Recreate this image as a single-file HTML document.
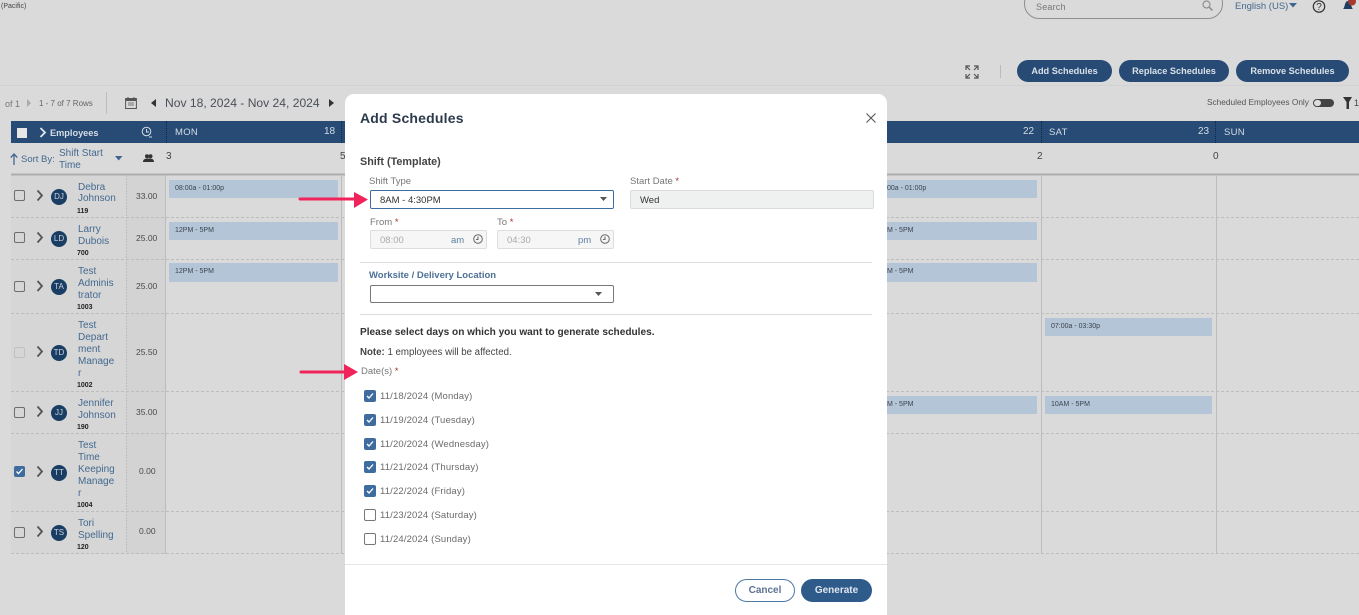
<!DOCTYPE html>
<html><head><meta charset="utf-8"><style>
html,body{margin:0;padding:0;width:1359px;height:615px;overflow:hidden;background:#dadada}
body{position:relative;font-family:"Liberation Sans",sans-serif;color:#4a4a4a}
#w{position:absolute;left:0;top:0;width:1359px;height:615px;overflow:hidden;filter:blur(.35px)}
.t{position:absolute;white-space:nowrap;font-size:10px;line-height:12px;height:12px;transform:translateY(1px)}
.b{position:absolute;box-sizing:border-box}
.s{position:absolute;background:#b4c5d7;font-size:7px;line-height:18px;padding-left:6px;box-sizing:border-box;color:#3b444e;white-space:nowrap;overflow:hidden}
.lnk{color:#43698f;font-size:10px}
.n{transform:translateY(3px)}
.id{color:#222;font-size:7px;font-weight:bold;transform:translateY(3px)}
.h{font-size:8.5px}
.av{position:absolute;left:51px;width:16px;height:16px;border-radius:50%;background:#1a3d63;color:#c9d3de;font-size:8px;line-height:16px;text-align:center}
.cb{position:absolute;left:14px;width:11px;height:11px;border:1.5px solid #6d6d6d;border-radius:2px;box-sizing:border-box}
.btn{position:absolute;top:60px;height:22px;border-radius:11px;background:#274b75;color:#d9e0e8;font-size:9.2px;font-weight:bold;text-align:center;line-height:23px}
.mc{position:absolute;left:364px;width:12px;height:12px;border-radius:2px;box-sizing:border-box;background:#3f6c9f}
.mc.off{background:#fff;border:1.5px solid #777}
.lb{position:absolute;left:380px;font-size:9.5px;line-height:12px;color:#6b6b6b;white-space:nowrap;letter-spacing:.15px;transform:translateY(2px)}
.req{color:#a33}
</style></head><body><div id="w">

<div class="t" style="left:1px;top:0;font-size:7px;color:#444">(Pacific)</div>
<div class="b" style="left:1024px;top:-12px;width:199px;height:31px;border:1px solid #8f8f8f;border-radius:15px"></div>
<div class="t" style="left:1036px;top:0;font-size:9px;color:#777;letter-spacing:.2px">Search</div>
<svg class="b" style="left:1201px;top:0" width="13" height="12" viewBox="0 0 13 12"><circle cx="5.500" cy="4.500" r="3.500" fill="none" stroke="#909090" stroke-width="1.200"/><path d="M8 7l3.500 3.500" stroke="#909090" stroke-width="1.600"/></svg>
<div class="t" style="left:1235px;top:0;color:#43698f;font-size:9.500px">English (US)</div>
<svg class="b" style="left:1289px;top:3px" width="8" height="5"><path d="M0 0h8L4 4.500z" fill="#3d648e"/></svg>
<svg class="b" style="left:1312px;top:0" width="14" height="14" viewBox="0 0 14 14"><circle cx="7" cy="6.500" r="5.700" fill="none" stroke="#333" stroke-width="1.200"/><text x="7" y="10" font-size="10" text-anchor="middle" fill="#333" font-family="Liberation Sans">?</text></svg>
<svg class="b" style="left:1343px;top:0" width="16" height="13" viewBox="0 0 16 13"><path d="M0 9c2-1 1.500-8 5-8s3 7 5 8z" fill="#1f3d5f"/><circle cx="9" cy="1.500" r="4" fill="#a53a30"/></svg>

<div class="b" style="left:0;top:85px;width:1359px;height:1px;background:#d2d2d2"></div>

<svg class="b" style="left:965px;top:65px" width="14" height="14" viewBox="0 0 14 14" fill="none" stroke="#555" stroke-width="1.200"><path d="M1 5V1h4M1 1l4 4M9 1h4v4M13 1L9 5M1 9v4h4M1 13l4-4M9 13h4V9M13 13L9 9"/></svg>
<div class="b" style="left:1000px;top:65px;width:1px;height:13px;background:#bbb"></div>
<div class="btn" style="left:1017px;width:95px">Add Schedules</div>
<div class="btn" style="left:1119px;width:110px">Replace Schedules</div>
<div class="btn" style="left:1236px;width:113px">Remove Schedules</div>

<div class="t" style="left:5px;top:97px;font-size:9px;color:#777">of 1</div>
<svg class="b" style="left:27px;top:99px" width="5" height="8"><path d="M0 0l4 4-4 4z" fill="#aaa"/></svg>
<div class="t" style="left:39px;top:97px;font-size:8px;color:#666">1 - 7 of 7 Rows</div>
<div class="b" style="left:106px;top:92px;width:1px;height:22px;background:#bdbdbd"></div>
<svg class="b" style="left:125px;top:97px" width="12" height="12" viewBox="0 0 12 12"><rect x=".6" y="1.500" width="10.800" height="10" fill="none" stroke="#555"/><rect x=".6" y="1.500" width="10.800" height="2.500" fill="#555"/><path d="M3 0v2M9 0v2" stroke="#555"/><path d="M3 6h6M3 8h6" stroke="#777"/></svg>
<svg class="b" style="left:151px;top:99px" width="6" height="8"><path d="M5 0v8L0 4z" fill="#333"/></svg>
<div class="t" style="left:165px;top:96px;font-size:12.100px;line-height:13px;height:13px;color:#4a4f57">Nov 18, 2024 - Nov 24, 2024</div>
<svg class="b" style="left:329px;top:99px" width="6" height="8"><path d="M0 0v8l5-4z" fill="#333"/></svg>

<div class="t" style="left:1207px;top:95px;font-size:8.300px;color:#555">Scheduled Employees Only</div>
<div class="b" style="left:1313px;top:99px;width:21px;height:8px;border-radius:4px;background:#444"></div>
<div class="b" style="left:1314px;top:100px;width:7px;height:6px;border-radius:3px;background:#ddd"></div>
<svg class="b" style="left:1343px;top:97px" width="10" height="12"><path d="M0 0h9L6 5v7H3.500V5z" fill="#333"/></svg>
<div class="t" style="left:1354px;top:96px;font-size:9px;color:#444">1</div>

<!-- table -->
<div class="b" style="left:11px;top:175px;width:116px;height:379px;background:#d6d6d6"></div>
<div class="b" style="left:127px;top:175px;width:39px;height:379px;background:#d3d3d3"></div>
<div class="b" style="left:11px;top:121px;width:1348px;height:22px;background:#274b75"></div>
<div class="b" style="left:17px;top:128px;width:10px;height:10px;background:#e6e6e6"></div>
<svg class="b" style="left:39px;top:127px" width="8" height="11" fill="none"><path d="M1.500 1l4.500 4.500L1.500 10" stroke="#dfe5ec" stroke-width="1.800"/></svg>
<div class="t" style="left:50px;top:126px;color:#d5dde6;font-size:9.200px;font-weight:bold">Employees</div>
<svg class="b" style="left:141px;top:126px" width="12" height="12" viewBox="0 0 12 12" fill="none" stroke="#d5dde6"><circle cx="5.500" cy="5.500" r="4.300"/><path d="M5.500 3v3h2.500M8 11h3"/></svg>
<div class="t" style="left:175px;top:126px;color:#d5dde6;font-size:9.500px;letter-spacing:.3px">MON</div>
<div class="t" style="left:324px;top:125px;color:#d5dde6;font-size:10px">18</div>
<div class="t" style="left:1023px;top:125px;color:#d5dde6;font-size:10px">22</div>
<div class="t" style="left:1049px;top:126px;color:#d5dde6;font-size:9.500px;letter-spacing:.3px">SAT</div>
<div class="t" style="left:1198px;top:125px;color:#d5dde6;font-size:10px">23</div>
<div class="t" style="left:1224px;top:126px;color:#d5dde6;font-size:9.500px;letter-spacing:.3px">SUN</div>
<div class="b" style="left:166px;top:121px;width:0;height:22px;border-left:1px dotted #12263f"></div>
<div class="b" style="left:341px;top:121px;width:0;height:22px;border-left:1px dotted #12263f"></div>
<div class="b" style="left:1041px;top:121px;width:0;height:22px;border-left:1px dotted #12263f"></div>
<div class="b" style="left:1215px;top:121px;width:0;height:22px;border-left:1px dotted #12263f"></div>

<svg class="b" style="left:10px;top:153px" width="8" height="12" fill="none" stroke="#43698f" stroke-width="1.300"><path d="M4 12V1M.8 4.500L4 1l3.200 3.500"/></svg>
<div class="t lnk" style="left:21px;top:153px;font-size:9.500px">Sort By:</div>
<div class="t lnk" style="left:59px;top:147px">Shift Start</div>
<div class="t lnk" style="left:59px;top:159px">Time</div>
<svg class="b" style="left:115px;top:156px" width="8" height="5"><path d="M0 0h7.500L3.700 4.500z" fill="#3d648e"/></svg>
<svg class="b" style="left:143px;top:154px" width="11" height="9" viewBox="0 0 11 9"><circle cx="4" cy="2.200" r="2" fill="#333"/><circle cx="7.500" cy="2.200" r="2" fill="#333"/><path d="M0 8c0-3 2-3.500 5.500-3.500S11 5 11 8z" fill="#333"/></svg>
<div class="t" style="left:166px;top:150px;font-size:10px;color:#444">3</div>
<div class="t" style="left:340px;top:150px;font-size:10px;color:#444">5</div>
<div class="t" style="left:1037px;top:150px;font-size:10px;color:#444">2</div>
<div class="t" style="left:1213px;top:150px;font-size:10px;color:#444">0</div>

<svg class="b" style="left:0;top:0" width="1359" height="615">
<rect x="11" y="173.500" width="1348" height="2" fill="#adadad"/>
<g stroke="#bdbdbd" stroke-dasharray="3 2"><path d="M11 217.500H1359M11 259.500H1359M11 313.500H1359M11 391.500H1359M11 433.500H1359M11 511.500H1359M11 553.500H1359"/></g>
<g stroke="#bcbcbc"><path d="M165.500 175V554M341.500 175V554M1041.500 175V554M1216.500 175V554"/></g>
<path d="M126.500 175V554" stroke="#bdbdbd" stroke-dasharray="2 1"/>
</svg>

<div class="s" style="left:169px;top:180px;width:169px;height:18px">08:00a - 01:00p</div>
<div class="s" style="left:169px;top:222px;width:169px;height:18px">12PM - 5PM</div>
<div class="s" style="left:169px;top:263px;width:169px;height:19px">12PM - 5PM</div>
<div class="s" style="left:887px;top:180px;width:150px;height:18px;padding-left:0">00a - 01:00p</div>
<div class="s" style="left:887px;top:222px;width:150px;height:18px;padding-left:0">M - 5PM</div>
<div class="s" style="left:887px;top:263px;width:150px;height:19px;padding-left:0">M - 5PM</div>
<div class="s" style="left:887px;top:396px;width:150px;height:18px;padding-left:0">M - 5PM</div>
<div class="s" style="left:1045px;top:318px;width:167px;height:18px">07:00a - 03:30p</div>
<div class="s" style="left:1045px;top:396px;width:167px;height:18px">10AM - 5PM</div>

<!-- rows -->
<div class="cb" style="top:190px"></div><div class="cb" style="top:232px"></div><div class="cb" style="top:281px"></div>
<div class="cb" style="top:347px;border-color:#c0c0c0"></div><div class="cb" style="top:407px"></div>
<div class="cb" style="top:466px;background:#3f6c9f;border:0"></div><div class="cb" style="top:527px"></div>
<svg class="b" style="left:14px;top:466px" width="11" height="11" fill="none"><path d="M2.500 5.500l2 2 4-4.500" stroke="#fff" stroke-width="1.300"/></svg>
<svg class="b" style="left:36px;top:0" width="9" height="560" fill="none" stroke="#555" stroke-width="1.800"><path d="M1.500 190.500l4.500 5-4.500 5M1.500 232.500l4.500 5-4.500 5M1.500 281l4.500 5-4.500 5M1.500 346.500l4.500 5-4.500 5M1.500 406.500l4.500 5-4.500 5M1.500 466.500l4.500 5-4.500 5M1.500 526.500l4.500 5-4.500 5"/></svg>
<div class="av" style="top:189px">DJ</div><div class="av" style="top:231px">LD</div><div class="av" style="top:279px">TA</div>
<div class="av" style="top:345px">TD</div><div class="av" style="top:405px">JJ</div><div class="av" style="top:465px">TT</div><div class="av" style="top:525px">TS</div>

<div class="t lnk n" style="left:78px;top:179px">Debra</div><div class="t lnk n" style="left:78px;top:190px">Johnson</div><div class="t id" style="left:77px;top:203px">119</div>
<div class="t lnk n" style="left:78px;top:221px">Larry</div><div class="t lnk n" style="left:78px;top:233px">Dubois</div><div class="t id" style="left:77px;top:245px">700</div>
<div class="t lnk n" style="left:78px;top:263px">Test</div><div class="t lnk n" style="left:78px;top:275px">Adminis</div><div class="t lnk n" style="left:78px;top:287px">trator</div><div class="t id" style="left:77px;top:299px">1003</div>
<div class="t lnk n" style="left:78px;top:317px">Test</div><div class="t lnk n" style="left:78px;top:329px">Depart</div><div class="t lnk n" style="left:78px;top:341px">ment</div><div class="t lnk n" style="left:78px;top:353px">Manage</div><div class="t lnk n" style="left:78px;top:365px">r</div><div class="t id" style="left:77px;top:377px">1002</div>
<div class="t lnk n" style="left:78px;top:395px">Jennifer</div><div class="t lnk n" style="left:78px;top:407px">Johnson</div><div class="t id" style="left:77px;top:419px">190</div>
<div class="t lnk n" style="left:78px;top:437px">Test</div><div class="t lnk n" style="left:78px;top:449px">Time</div><div class="t lnk n" style="left:78px;top:461px">Keeping</div><div class="t lnk n" style="left:78px;top:473px">Manage</div><div class="t lnk n" style="left:78px;top:485px">r</div><div class="t id" style="left:77px;top:497px">1004</div>
<div class="t lnk n" style="left:78px;top:515px">Tori</div><div class="t lnk n" style="left:78px;top:527px">Spelling</div><div class="t id" style="left:77px;top:539px">120</div>

<div class="t h" style="left:136px;top:189px">33.00</div>
<div class="t h" style="left:136px;top:231px">25.00</div>
<div class="t h" style="left:136px;top:279px">25.00</div>
<div class="t h" style="left:136px;top:345px">25.50</div>
<div class="t h" style="left:136px;top:405px">35.00</div>
<div class="t h" style="left:139px;top:464px">0.00</div>
<div class="t h" style="left:139px;top:524px">0.00</div>

<!-- modal -->
<div class="b" style="left:345px;top:94px;width:542px;height:530px;background:#fff;border-radius:9px"></div>
<div class="t" style="left:360px;top:110px;height:15px;line-height:15px;font-size:14px;font-weight:bold;color:#2c3a4b;letter-spacing:.2px">Add Schedules</div>
<svg class="b" style="left:866px;top:113px" width="10" height="10" fill="none" stroke="#555" stroke-width="1.100"><path d="M.5.500l9 9M9.500.500l-9 9"/></svg>
<div class="t" style="left:360px;top:155px;font-size:10.800px;font-weight:bold;color:#444">Shift (Template)</div>
<div class="t" style="left:369px;top:175px;font-size:9.500px;color:#777">Shift Type</div>
<div class="t" style="left:630px;top:175px;font-size:9.500px;color:#777">Start Date <span class="req">*</span></div>
<div class="b" style="left:370px;top:190px;width:244px;height:19px;border:1.500px solid #3f6c9f;border-radius:2px"></div>
<div class="t" style="left:380px;top:194px;font-size:9.500px;color:#333">8AM - 4:30PM</div>
<svg class="b" style="left:600px;top:197px" width="7" height="4"><path d="M0 0h7L3.500 4z" fill="#555"/></svg>
<div class="b" style="left:630px;top:190px;width:244px;height:19px;background:#eff0f0;border:1px solid #dcdcdc;border-radius:2px"></div>
<div class="t" style="left:640px;top:194px;font-size:9.500px;color:#333">Wed</div>
<div class="t" style="left:370px;top:216px;font-size:9.500px;color:#777">From <span class="req">*</span></div>
<div class="t" style="left:497px;top:216px;font-size:9.500px;color:#777">To <span class="req">*</span></div>
<div class="b" style="left:370px;top:230px;width:117px;height:19px;background:#f6f6f6;border:1px solid #ddd;border-radius:2px"></div>
<div class="b" style="left:497px;top:230px;width:117px;height:19px;background:#f6f6f6;border:1px solid #ddd;border-radius:2px"></div>
<div class="t" style="left:380px;top:234px;font-size:9.500px;color:#aaa">08:00</div>
<div class="t" style="left:451px;top:234px;font-size:9.500px;color:#5d7fa3">am</div>
<div class="t" style="left:507px;top:234px;font-size:9.500px;color:#aaa">04:30</div>
<div class="t" style="left:578px;top:234px;font-size:9.500px;color:#5d7fa3">pm</div>
<svg class="b" style="left:473px;top:234px" width="10" height="10" fill="none" stroke="#666"><circle cx="5" cy="5" r="4.300"/><path d="M5 2.500V5.500H3"/></svg>
<svg class="b" style="left:600px;top:234px" width="10" height="10" fill="none" stroke="#666"><circle cx="5" cy="5" r="4.300"/><path d="M5 2.500V5.500H3"/></svg>
<div class="b" style="left:360px;top:262px;width:512px;height:1px;background:#dcdcdc"></div>
<div class="t" style="left:369px;top:269px;font-size:9.500px;font-weight:bold;color:#4d7096">Worksite / Delivery Location</div>
<div class="b" style="left:370px;top:285px;width:244px;height:18px;border:1px solid #777;border-radius:2px"></div>
<svg class="b" style="left:595px;top:292px" width="7" height="4"><path d="M0 0h7L3.500 4z" fill="#555"/></svg>
<div class="b" style="left:360px;top:314px;width:512px;height:1px;background:#dcdcdc"></div>
<div class="t" style="left:360px;top:326px;font-size:10.100px;font-weight:bold;color:#333">Please select days on which you want to generate schedules.</div>
<div class="t" style="left:360px;top:346px;font-size:9.700px;color:#444"><b>Note:</b> 1 employees will be affected.</div>
<div class="t" style="left:361px;top:365px;font-size:9.500px;color:#777">Date(s) <span class="req">*</span></div>

<div class="mc" style="top:390px"></div><div class="lb" style="top:389px">11/18/2024 (Monday)</div>
<div class="mc" style="top:414px"></div><div class="lb" style="top:413px">11/19/2024 (Tuesday)</div>
<div class="mc" style="top:438px"></div><div class="lb" style="top:437px">11/20/2024 (Wednesday)</div>
<div class="mc" style="top:461px"></div><div class="lb" style="top:460px">11/21/2024 (Thursday)</div>
<div class="mc" style="top:485px"></div><div class="lb" style="top:484px">11/22/2024 (Friday)</div>
<div class="mc off" style="top:509px"></div><div class="lb" style="top:508px">11/23/2024 (Saturday)</div>
<div class="mc off" style="top:533px"></div><div class="lb" style="top:532px">11/24/2024 (Sunday)</div>
<svg class="b" style="left:364px;top:0" width="12" height="500" fill="none" stroke="#fff" stroke-width="1.300"><path d="M3 396l2 2 4-4.500M3 420l2 2 4-4.500M3 444l2 2 4-4.500M3 467l2 2 4-4.500M3 491l2 2 4-4.500"/></svg>

<div class="b" style="left:345px;top:564px;width:542px;height:1px;background:#e6e6e6"></div>
<div class="b" style="left:735px;top:579px;width:60px;height:23px;border:1px solid #4d7aa6;border-radius:12px;text-align:center;font-size:10px;font-weight:bold;line-height:22px;color:#5b7391">Cancel</div>
<div class="b" style="left:801px;top:579px;width:71px;height:23px;background:#2f5b8b;border-radius:12px;text-align:center;font-size:10px;font-weight:bold;line-height:24px;color:#e0e7ef">Generate</div>

<!-- arrows -->
<svg class="b" style="left:0;top:0" width="1359" height="615">
<path d="M300 199H356" stroke="#f0245a" stroke-width="3" stroke-linecap="round"/><path d="M354 192L368 199.500 354 208z" fill="#f0245a"/>
<path d="M301 372H346" stroke="#f0245a" stroke-width="3" stroke-linecap="round"/><path d="M344 364L358 372 344 380z" fill="#f0245a"/>
</svg>
</div></body></html>
